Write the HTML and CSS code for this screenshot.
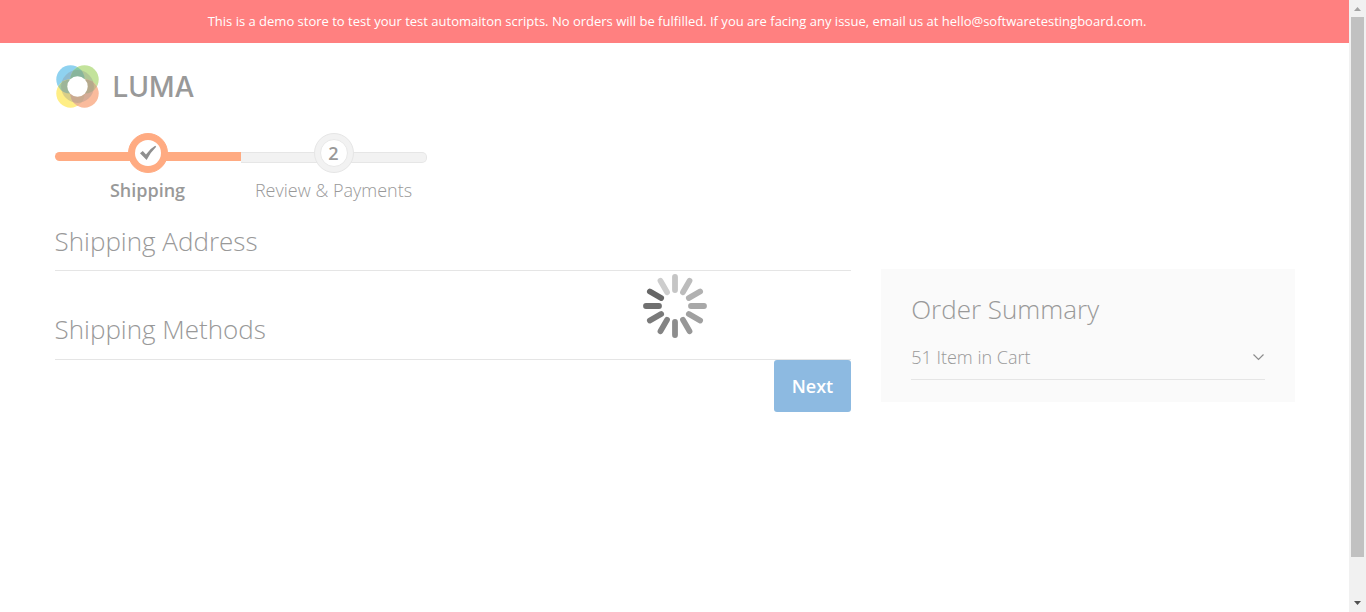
FILE: index.html
```html
<!DOCTYPE html>
<html lang="en">
<head>
<meta charset="utf-8">
<title>Checkout</title>
<link rel="stylesheet" href="styles.css">
</head>
<body>
<div class="viewport">
  <div class="page">
    <p class="notice">This is a demo store to test your test automaiton scripts. No orders will be fulfilled. If you are facing any issue, email us at hello@softwaretestingboard.com.</p>
    <div class="container">
      <header class="header">
        <a class="logo" href="#" aria-label="Luma home">
          <svg class="logo-mark" viewBox="0 0 44 44" aria-hidden="true">
            <circle cx="15.5" cy="14.5" r="14.2" fill="#8fd2f0"/>
            <circle cx="29.5" cy="14.5" r="14.2" fill="#c3e39b"/>
            <circle cx="15.5" cy="28.5" r="14.2" fill="#ffee85"/>
            <circle cx="29.5" cy="28.5" r="14.2" fill="#fabb9c"/>
            <path d="M22.5 2.2A14.2 14.2 0 0 1 22.5 26.8A14.2 14.2 0 0 1 22.5 2.2Z" fill="#86c9a4"/>
            <path d="M22.5 40.8A14.2 14.2 0 0 1 22.5 16.2A14.2 14.2 0 0 1 22.5 40.8Z" fill="#e8b892"/>
            <path d="M3.2 21.5A14.2 14.2 0 0 1 27.8 21.5A14.2 14.2 0 0 1 3.2 21.5Z" fill="#a5c9a0"/>
            <path d="M41.8 21.5A14.2 14.2 0 0 1 17.2 21.5A14.2 14.2 0 0 1 41.8 21.5Z" fill="#c9b78c"/>
            <circle cx="22.5" cy="21.5" r="16.4" fill="#8c8c8c" fill-opacity=".32"/>
            <circle cx="22.5" cy="21.5" r="10.2" fill="#fff"/>
          </svg>
          <span class="logo-name">LUMA</span>
        </a>
      </header>
      <ol class="progress">
        <li class="step step-active">
          <span class="step-dot"><span class="step-core"><svg class="tick" viewBox="0 0 18 16" aria-hidden="true"><path d="M1 8.2 3.8 6 7 9.4Q11 3.6 16.2.8L17.2 1.8Q11.6 7.2 7.6 15Z" fill="#8f8f8f"/></svg></span></span>
          <span class="step-label">Shipping</span>
        </li>
        <li class="step">
          <span class="step-dot"><span class="step-core">2</span></span>
          <span class="step-label">Review &amp; Payments</span>
        </li>
      </ol>
      <div class="checkout">
        <main class="main">
          <h2 class="title">Shipping Address</h2>
          <h2 class="title title-next">Shipping Methods</h2>
          <div class="actions"><button class="next" type="button">Next</button></div>
        </main>
        <aside class="summary">
          <h2 class="summary-title">Order Summary</h2>
          <button class="cart-toggle" type="button" aria-expanded="false">
            <span>51 Item in Cart</span>
            <svg class="chevron" viewBox="0 0 12 8" aria-hidden="true"><path d="M.5 1.5 5.5 6.5 10.5 1.5" fill="none" stroke="#8c8c8c" stroke-width="1.2"/></svg>
          </button>
        </aside>
      </div>
    </div>
    <svg class="loader" viewBox="-32 -32 64 64" role="img" aria-label="Loading">
      <g stroke-width="5.8" stroke-linecap="round">
        <path d="M0-16V-29" stroke="#c5c5c5"/>
        <path d="M0-16V-29" stroke="#bcbcbc" transform="rotate(30)"/>
        <path d="M0-16V-29" stroke="#b1b1b1" transform="rotate(60)"/>
        <path d="M0-16V-29" stroke="#a8a8a8" transform="rotate(90)"/>
        <path d="M0-16V-29" stroke="#a0a0a0" transform="rotate(120)"/>
        <path d="M0-16V-29" stroke="#979797" transform="rotate(150)"/>
        <path d="M0-16V-29" stroke="#8d8d8d" transform="rotate(180)"/>
        <path d="M0-16V-29" stroke="#848484" transform="rotate(210)"/>
        <path d="M0-16V-29" stroke="#7a7a7a" transform="rotate(240)"/>
        <path d="M0-16V-29" stroke="#707070" transform="rotate(270)"/>
        <path d="M0-16V-29" stroke="#666" transform="rotate(300)"/>
        <path d="M0-16V-29" stroke="#cdcdcd" transform="rotate(330)"/>
      </g>
    </svg>
  </div>
  <div class="scrollbar" aria-hidden="true">
    <svg class="arrow" viewBox="0 0 17 17"><path d="M5 11 8.5 7 12 11Z" fill="#a3a3a3"/></svg>
    <div class="track"><div class="thumb"></div></div>
    <svg class="arrow" viewBox="0 0 17 17"><path d="M5 6H12L8.5 10Z" fill="#505050"/></svg>
  </div>
</div>
</body>
</html>
```

FILE: styles.css
```css
* {
  box-sizing: border-box;
}

body {
  margin: 0;
  background: #fff;
  color: #999;
  font-family: "Open Sans", "Noto Sans", sans-serif;
  font-size: 18px;
}

.viewport {
  display: flex;
  height: 100vh;
}

.page {
  position: relative;
  flex: 1;
  min-width: 0;
  overflow: hidden;
}

.notice {
  margin: 0;
  padding: 12px 20px 13px 25px;
  background: #ff8080;
  color: #fff;
  font-size: 13px;
  line-height: 18px;
  text-align: center;
}

.container {
  max-width: 1280px;
  margin: 0 auto;
  padding: 0 20px;
}

.header {
  padding: 22px 0 24px;
}

.logo {
  display: inline-flex;
  align-items: center;
  gap: 14px;
  height: 44px;
  color: #999;
  text-decoration: none;
  vertical-align: top;
}

.logo-mark {
  width: 44px;
  height: 44px;
}

.logo-name {
  font-family: Inter, sans-serif;
  font-size: 28px;
  font-weight: 500;
  line-height: 42px;
}

.progress {
  display: grid;
  grid-template-columns: 1fr 1fr;
  width: 30%;
  margin: 0;
  padding: 0;
  list-style: none;
}

.step {
  position: relative;
  display: flex;
  flex-direction: column;
  align-items: center;
}

.step::before {
  content: "";
  position: absolute;
  top: 19px;
  left: 0;
  right: 0;
  height: 9px;
  border: 1px solid #e6e6e6;
  border-left: 0;
  border-radius: 0 5px 5px 0;
  background: #f2f2f2;
}

.step-active::before {
  border: 0;
  border-radius: 5px 0 0 5px;
  background: #ffab82;
}

.step-dot {
  position: relative;
  display: grid;
  place-items: center;
  width: 40px;
  height: 40px;
  border: 1px solid #e6e6e6;
  border-radius: 50%;
  background: #f2f2f2;
}

.step-core {
  display: grid;
  place-items: center;
  width: 28px;
  height: 28px;
  border: 1px solid #e8e8e8;
  border-radius: 50%;
  background: #fff;
  font-weight: 600;
  line-height: 24px;
}

.step-active .step-dot {
  border-color: #ffab82;
  background: #ffab82;
}

.step-active .step-core {
  width: 26px;
  height: 26px;
  border: 0;
}

.tick {
  width: 18px;
  height: 16px;
}

.step-label {
  margin-top: 5px;
  font-weight: 300;
  line-height: 25px;
}

.step-active .step-label {
  font-weight: 600;
}

.checkout {
  display: grid;
  grid-template-columns: 1fr 33.333%;
  gap: 30px;
  align-items: start;
  padding-top: 24px;
}

.title,
.summary-title {
  margin: 0;
  color: #999;
  font-size: 26px;
  font-weight: 300;
  line-height: 28px;
}

.title {
  padding-bottom: 15px;
  border-bottom: 1px solid #e5e5e5;
}

.title-next {
  margin-top: 44px;
  padding-bottom: 16px;
}

.actions {
  display: flex;
  justify-content: flex-end;
}

.next {
  padding: 14px 18px;
  border: 0;
  border-radius: 3px;
  background: #8dbae1;
  color: #fff;
  font: 600 18px/24px "Open Sans", "Noto Sans", sans-serif;
}

.summary {
  margin-top: 42px;
  padding: 26px 30px 22px;
  background: #fafafa;
}

.cart-toggle {
  display: flex;
  align-items: center;
  justify-content: space-between;
  width: 100%;
  margin-top: 22px;
  padding: 0 0 10px;
  border: 0;
  border-bottom: 1px solid #e5e5e5;
  background: none;
  color: #999;
  font: 300 18px/24px "Open Sans", "Noto Sans", sans-serif;
}

.chevron {
  width: 12px;
  height: 8px;
}

.loader {
  position: absolute;
  inset: 0;
  width: 64px;
  height: 64px;
  margin: auto;
}

.scrollbar {
  display: flex;
  flex-direction: column;
  width: 17px;
  background: #f1f1f1;
}

.arrow {
  width: 17px;
  height: 17px;
}

.track {
  flex: 1;
  padding: 0 2px;
}

.thumb {
  height: 93.5%;
  background: #c1c1c1;
}
```
